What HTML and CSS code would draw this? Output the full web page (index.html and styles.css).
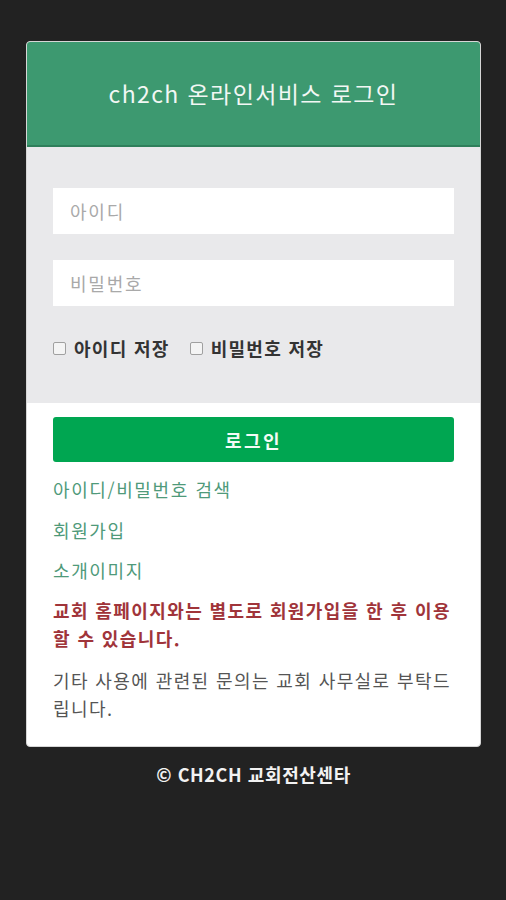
FILE: index.html
```html
<!DOCTYPE html>
<html lang="ko">
<head>
<meta charset="utf-8">
<title>ch2ch 온라인서비스 로그인</title>
<link rel="stylesheet" href="styles.css">
</head>
<body>
<div class="page">
  <div class="card">
    <div class="card-header">ch2ch 온라인서비스 로그인</div>
    <div class="form-area">
      <div class="field">아이디</div>
      <div class="field">비밀번호</div>
      <div class="checks">
        <label class="check"><span class="box"></span>아이디 저장</label>
        <label class="check"><span class="box"></span>비밀번호 저장</label>
      </div>
    </div>
    <div class="card-body">
      <div class="btn">로그인</div>
      <div class="links">
        <a class="link">아이디/비밀번호 검색</a>
        <a class="link">회원가입</a>
        <a class="link">소개이미지</a>
      </div>
      <p class="notice">교회 홈페이지와는 별도로 회원가입을 한 후 이용할 수 있습니다.</p>
      <p class="info">기타 사용에 관련된 문의는 교회 사무실로 부탁드립니다.</p>
    </div>
  </div>
  <div class="footer">© CH2CH 교회전산센타</div>
</div>
</body>
</html>
```
FILE: styles.css
```css
* { box-sizing: border-box; }
html, body {
  margin: 0;
  padding: 0;
  background: #222222;
  font-family: "Noto Sans CJK KR", "Noto Sans", sans-serif;
}
.page {
  padding: 41px 25px 0 26px;
}
.card {
  background: #ffffff;
  border-radius: 4px;
  overflow: hidden;
  border: 1px solid #d6d6d6;
}
.card-header {
  background: #3d9970;
  color: #f2f7f4;
  font-size: 23px;
  letter-spacing: 1.4px;
  height: 105px;
  display: flex;
  align-items: center;
  justify-content: center;
  border-bottom: 2px solid #2f7f5b;
  padding-bottom: 2px;
}
.form-area {
  background: #e9e9eb;
  padding: 41px 26px 39px 26px;
  display: flex;
  flex-direction: column;
}
.field {
  background: #ffffff;
  height: 46px;
  display: flex;
  align-items: center;
  padding-left: 17px;
  color: #a9a9a9;
  font-size: 18px;
  letter-spacing: 1.8px;
  margin-bottom: 26px;
}
.checks {
  display: flex;
  gap: 20px;
  height: 32px;
  align-items: center;
}
.check {
  display: flex;
  align-items: center;
  font-weight: bold;
  font-size: 18px;
  letter-spacing: 1.3px;
  color: #333;
}
.box {
  width: 13px;
  height: 13px;
  border: 1px solid #a0a0a0;
  border-radius: 2px;
  background: #f4f4f4;
  margin-right: 8px;
}
.card-body {
  padding: 14px 26px 24px 26px;
}
.btn {
  background: #00a651;
  color: #f3fbf6;
  height: 45px;
  border-radius: 3px;
  display: flex;
  align-items: center;
  justify-content: center;
  font-weight: bold;
  font-size: 18px;
  letter-spacing: 2.5px;
}
.links {
  display: flex;
  flex-direction: column;
  margin-top: 7px;
}
.link {
  color: #4f9a7a;
  font-size: 18px;
  letter-spacing: 1.6px;
  line-height: 40.5px;
}
.notice {
  margin: 5.5px 0 0 0;
  color: #a0343a;
  font-weight: bold;
  font-size: 18px;
  letter-spacing: 1.4px;
  line-height: 28px;
}
.info {
  margin: 14px 0 0 0;
  color: #555555;
  font-size: 18px;
  letter-spacing: 1.4px;
  line-height: 28px;
}
.footer {
  text-align: center;
  color: #f2f2f2;
  font-weight: bold;
  font-size: 18px;
  letter-spacing: 0.6px;
  padding-top: 14px;
}
```
